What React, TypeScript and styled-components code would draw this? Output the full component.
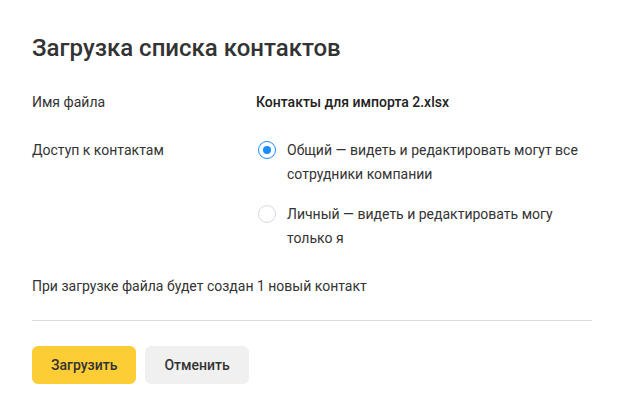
import styled, { createGlobalStyle } from "styled-components";

const GlobalStyle = createGlobalStyle`
    * { box-sizing: border-box; }
    body {
        margin: 0;
        background: #FFF;
        font-family: Roboto, "Noto Sans", sans-serif;
        color: #333;
    }
`;

export default function App() {
    return (
        <>
            <GlobalStyle />
            <Dialog>
                <Title>Загрузка списка контактов</Title>
                <Row>
                    <Label>Имя файла</Label>
                    <Value>Контакты для импорта 2.xlsx</Value>
                </Row>
                <Row>
                    <Label>Доступ к контактам</Label>
                    <Options>
                        <Option>
                            <Radio $checked />
                            <span>Общий — видеть и редактировать могут все сотрудники компании</span>
                        </Option>
                        <Option>
                            <Radio />
                            <span>Личный — видеть и редактировать могу только я</span>
                        </Option>
                    </Options>
                </Row>
                <Note>При загрузке файла будет создан 1 новый контакт</Note>
                <Divider />
                <Buttons>
                    <Button $primary>Загрузить</Button>
                    <Button>Отменить</Button>
                </Buttons>
            </Dialog>
        </>
    );
}

const Dialog = styled.div`
    width: 624px;
    height: 417px;
    padding: 30px 32px 0 32px;
`;

const Title = styled.h1`
    margin: 0 0 24px 0;
    font-size: 24px;
    font-weight: 500;
    line-height: 36px;
    color: #333;
`;

const Row = styled.div`
    display: flex;
    align-items: flex-start;
    margin-bottom: 24px;
`;

const Label = styled.div`
    width: 224px;
    font-size: 14px;
    line-height: 24px;
    color: #333;
`;

const Value = styled.div`
    font-size: 14px;
    font-weight: 500;
    line-height: 24px;
    color: #222;
`;

const Options = styled.div`
    display: flex;
    flex-direction: column;
    gap: 16px;
    width: 330px;
`;

const Option = styled.label`
    display: flex;
    align-items: flex-start;
    gap: 11px;
    font-size: 14px;
    line-height: 24px;
`;

const Radio = styled.span<{ $checked?: boolean }>`
    flex: none;
    width: 18px;
    height: 18px;
    margin: 3px 0 0 2px;
    border-radius: 50%;
    border: 1.5px solid ${p => p.$checked ? "#1A8CFF" : "#DADADA"};
    display: flex;
    align-items: center;
    justify-content: center;

    &::after{
        content: "";
        width: 8px;
        height: 8px;
        border-radius: 50%;
        background: #1A8CFF;
        display: ${p => p.$checked ? "block" : "none"};
    }
`;

const Note = styled.div`
    font-size: 14px;
    line-height: 24px;
    margin-top: 4px;
`;

const Divider = styled.div`
    height: 1px;
    background: #DCDCDC;
    margin: 22px 0 25px 0;
`;

const Buttons = styled.div`
    display: flex;
    gap: 9px;
`;

const Button = styled.button<{ $primary?: boolean }>`
    height: 38px;
    padding: 0 19px;
    border: none;
    border-radius: 6px;
    font-family: Roboto, sans-serif;
    font-size: 14px;
    font-weight: 500;
    color: #333;
    background: ${p => p.$primary ? "#FDCD36" : "#F0F0F0"};
`;
